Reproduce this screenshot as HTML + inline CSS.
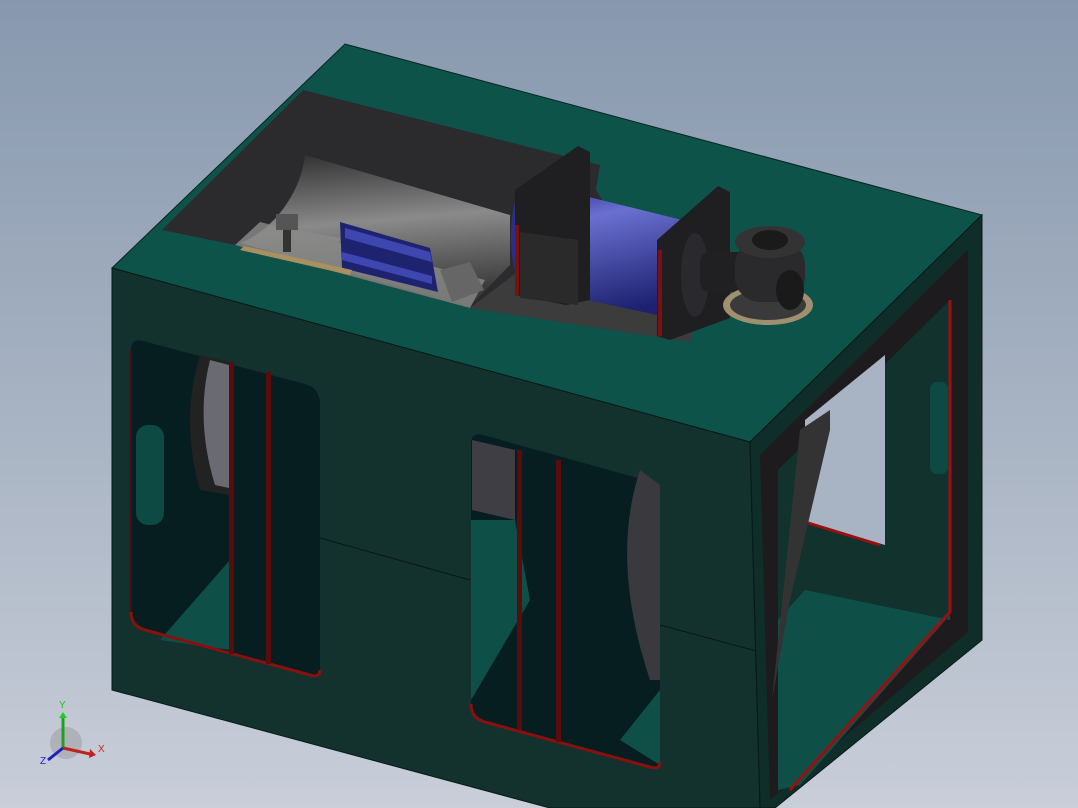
<!DOCTYPE html>
<html><head><style>
html,body{margin:0;padding:0;width:1078px;height:808px;overflow:hidden}
svg{display:block}
</style></head><body>
<svg width="1078" height="808" viewBox="0 0 1078 808" xmlns="http://www.w3.org/2000/svg">
<defs>
<linearGradient id="bg" x1="0" y1="0" x2="0" y2="1">
<stop offset="0" stop-color="#8798ae"/><stop offset="0.55" stop-color="#aab5c4"/><stop offset="1" stop-color="#c9ced9"/>
</linearGradient>
<linearGradient id="blue" x1="0" y1="0" x2="0.25" y2="1">
<stop offset="0" stop-color="#2a2f90"/><stop offset="0.3" stop-color="#6a70d0"/><stop offset="1" stop-color="#1d2170"/>
</linearGradient>
<linearGradient id="trough" x1="0" y1="0" x2="0.15" y2="1">
<stop offset="0" stop-color="#2c2c2c"/><stop offset="0.5" stop-color="#8a8a8a"/><stop offset="1" stop-color="#3a3a3a"/>
</linearGradient>
</defs>
<rect width="1078" height="808" fill="url(#bg)"/>
<!-- top face -->
<polygon points="112,268 345,44 982,215 750,442" fill="#0e534a" stroke="#062420" stroke-width="1"/>
<!-- cavity -->
<polygon points="162,230 303,90 600,165 596,190 690,342 470,308 235,245" fill="#2b2b2d"/>
<path d="M305,155 C300,200 265,235 240,243 L470,306 L510,265 L510,215 Z" fill="url(#trough)"/>
<polygon points="235,245 470,308 485,280 260,222" fill="#8b8b89" opacity="0.8"/>
<polygon points="470,308 690,342 700,300 520,270" fill="#3c3c3c"/>
<!-- pneumatic cylinder -->
<polygon points="340,222 430,248 438,292 342,268" fill="#1e2370"/>
<polygon points="345,228 430,252 432,262 345,238" fill="#3e46b0"/>
<polygon points="342,252 432,276 432,284 342,260" fill="#3e46b0"/>
<rect x="276" y="214" width="22" height="16" fill="#555"/>
<rect x="283" y="230" width="8" height="22" fill="#333"/>
<line x1="298" y1="232" x2="340" y2="240" stroke="#888" stroke-width="4"/>
<path d="M240,250 L350,275 L352,270 L244,246 Z" fill="#a89060"/>
<polygon points="440,270 470,262 484,290 452,302" fill="#666"/>
<!-- motor -->
<ellipse cx="526" cy="236" rx="15" ry="50" fill="#2a2f8a"/>
<path d="M540,185 L690,222 L690,322 L540,290 Z" fill="url(#blue)"/>
<ellipse cx="545" cy="236" rx="12" ry="50" fill="#3a40a8"/>
<polygon points="515,190 578,146 590,152 590,300 566,305 515,295" fill="#1f1f22"/>
<line x1="517" y1="225" x2="517" y2="295" stroke="#7a1010" stroke-width="4"/>
<polygon points="520,232 578,240 578,305 520,298" fill="#2a2a2a"/>
<polygon points="657,240 718,186 730,192 730,318 670,340 657,336" fill="#1f1f22"/>
<line x1="660" y1="250" x2="660" y2="336" stroke="#7a1010" stroke-width="4"/>
<ellipse cx="695" cy="275" rx="14" ry="42" fill="#2a2a2e"/>
<rect x="700" y="252" width="60" height="40" rx="10" fill="#202022"/>
<ellipse cx="768" cy="305" rx="45" ry="20" fill="#a09070"/>
<ellipse cx="768" cy="305" rx="38" ry="15" fill="#3a3a3a"/>
<rect x="735" y="240" width="70" height="62" rx="25" fill="#2a2a2c"/>
<ellipse cx="770" cy="242" rx="35" ry="16" fill="#333"/>
<ellipse cx="770" cy="240" rx="18" ry="10" fill="#1a1a1a"/>
<ellipse cx="790" cy="290" rx="14" ry="20" fill="#1a1a1a"/>
<!-- front face -->
<polygon points="112,268 750,442 760,808 550,808 112,690" fill="#13312d" stroke="#061a17" stroke-width="1"/>
<line x1="320" y1="538" x2="470" y2="580" stroke="#061a17"/>
<line x1="660" y1="625" x2="760" y2="652" stroke="#061a17"/>
<!-- window 1 -->
<path d="M131,350 Q131,338 143,341 L305,384 Q320,388 320,405 L320,670 Q320,678 310,675 L145,630 Q131,626 131,612 Z" fill="#061e1f"/>
<polygon points="160,640 230,560 230,650" fill="#0e5048"/>
<path d="M131,612 Q131,626 145,630 L310,675 Q320,678 320,670" fill="none" stroke="#8a1010" stroke-width="3"/>
<line x1="131" y1="350" x2="131" y2="612" stroke="#4a0c0c" stroke-width="2"/>
<rect x="229" y="362" width="5" height="292" fill="#5a0c0c"/>
<rect x="266" y="372" width="5" height="292" fill="#5a0c0c"/>
<path d="M200,355 Q180,420 200,490 L229,495 L229,362 Z" fill="#222"/>
<path d="M210,360 Q195,420 215,485 L229,488 L229,365 Z" fill="#6a6a72"/>
<rect x="136" y="425" width="28" height="100" rx="12" fill="#0d4a44"/>
<!-- window 2 -->
<path d="M471,444 Q471,432 483,435 L645,480 Q660,484 660,500 L660,762 Q660,770 650,767 L485,722 Q471,718 471,704 Z" fill="#061e1f"/>
<polygon points="471,520 515,520 530,600 471,700" fill="#0e5048"/>
<polygon points="620,740 660,690 660,765" fill="#0e5048"/>
<path d="M472,440 L515,450 L515,520 L472,510 Z" fill="#3e3e44"/>
<path d="M471,704 Q471,718 485,722 L650,767 Q660,770 660,762" fill="none" stroke="#8a1010" stroke-width="3"/>
<rect x="517" y="450" width="5" height="280" fill="#5a0c0c"/>
<rect x="556" y="460" width="5" height="282" fill="#5a0c0c"/>
<path d="M640,470 Q610,560 650,680 L660,680 L660,485 Z" fill="#3a3a3e"/>
<!-- right face -->
<polygon points="750,442 982,215 982,640 775,808 760,808" fill="#0f2d29" stroke="#061a17"/>
<polygon points="760,455 968,250 968,632 770,800" fill="#1e1b1f"/>
<polygon points="778,470 950,300 950,615 778,792" fill="#12322d"/>
<polygon points="805,420 885,355 885,545 805,522" fill="#a8b3c3"/>
<polygon points="778,620 805,590 950,620 950,615 800,785 778,790" fill="#0e5048"/>
<path d="M805,522 L880,545" stroke="#9a1010" stroke-width="3"/>
<path d="M950,300 L950,612 L790,790" fill="none" stroke="#9a1010" stroke-width="3"/>
<path d="M830,410 L800,430 L772,700 L790,600 L830,430 Z" fill="#333"/>
<rect x="930" y="382" width="18" height="92" rx="7" fill="#0d4a44"/>
<!-- axis triad -->
<g font-family="Liberation Sans,sans-serif" font-size="10">
<circle cx="66" cy="743" r="16" fill="#999" opacity="0.5"/>
<line x1="63" y1="748" x2="63" y2="718" stroke="#20a020" stroke-width="3"/>
<polygon points="59,718 67,718 63,712" fill="#20d020"/>
<line x1="63" y1="748" x2="90" y2="754" stroke="#c02020" stroke-width="3"/>
<polygon points="90,749 96,755 89,758" fill="#c02020"/>
<line x1="63" y1="748" x2="48" y2="760" stroke="#2020c0" stroke-width="3"/>
<text x="59" y="708" fill="#20c020">Y</text>
<text x="98" y="752" fill="#d02020">X</text>
<text x="40" y="764" fill="#2020d0">Z</text>
</g>
</svg>
</body></html>
